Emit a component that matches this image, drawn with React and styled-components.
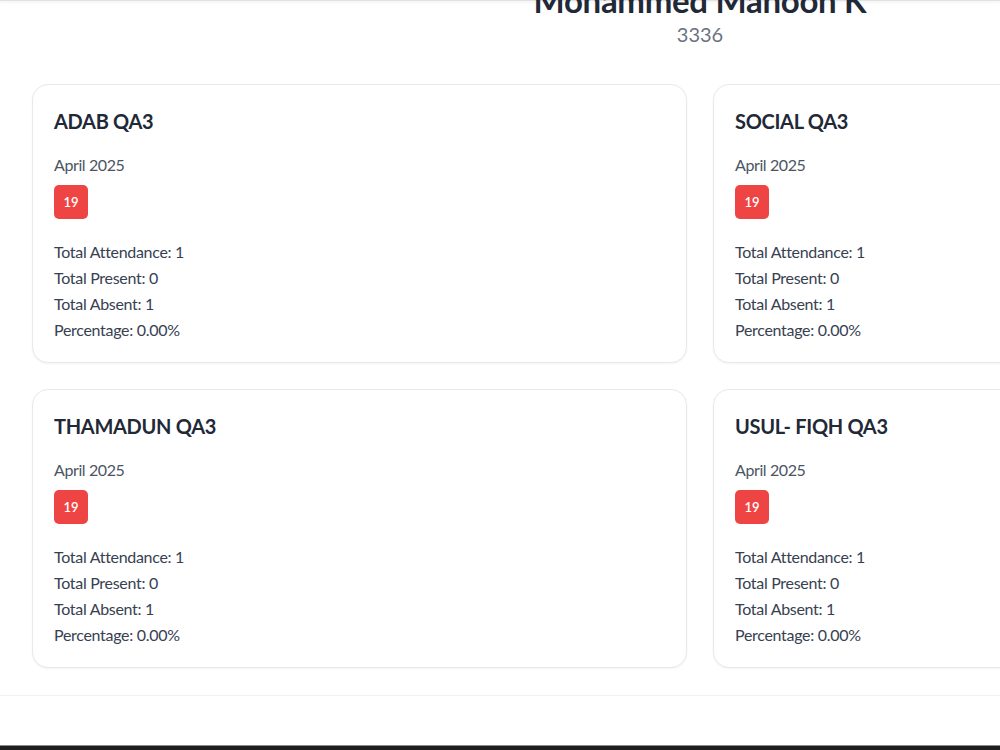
import styled, { createGlobalStyle } from 'styled-components'

const GlobalStyle = createGlobalStyle`
    html, body {
        margin: 0;
        padding: 0;
        background: #ffffff;
        overflow-x: hidden;
    }
    body {
        font-family: Lato, "Open Sans", "Liberation Sans", sans-serif;
        color: #1f2937;
    }
    * {
        box-sizing: border-box;
    }
`

const subjects = [
    { name: 'ADAB QA3', month: 'April 2025', days: [19], total: 1, present: 0, absent: 1 },
    { name: 'SOCIAL QA3', month: 'April 2025', days: [19], total: 1, present: 0, absent: 1 },
    { name: 'THAMADUN QA3', month: 'April 2025', days: [19], total: 1, present: 0, absent: 1 },
    { name: 'USUL- FIQH QA3', month: 'April 2025', days: [19], total: 1, present: 0, absent: 1 },
]

const percent = (s) => (s.total ? (s.present / s.total) * 100 : 0).toFixed(2)

export default function App() {
    return (
        <>
            <GlobalStyle />
            <TopEdge />
            <Page>
                <Profile>
                    <StudentName>Mohammed Mahoon K</StudentName>
                    <AdmissionNo>3336</AdmissionNo>
                </Profile>
                <CardGrid>
                    {subjects.map((s) => (
                        <SubjectCard key={s.name}>
                            <SubjectTitle>{s.name}</SubjectTitle>
                            <Month>{s.month}</Month>
                            <DayList>
                                {s.days.map((d) => (
                                    <AbsentDay key={d}>{d}</AbsentDay>
                                ))}
                            </DayList>
                            <Stats>
                                <li>Total Attendance: {s.total}</li>
                                <li>Total Present: {s.present}</li>
                                <li>Total Absent: {s.absent}</li>
                                <li>Percentage: {percent(s)}%</li>
                            </Stats>
                        </SubjectCard>
                    ))}
                </CardGrid>
            </Page>
            <Divider />
            <Footer />
        </>
    )
}

const TopEdge = styled.div`
    height: 1px;
    background: #e2e2e2;
    box-shadow: 0 1px 3px rgba(0, 0, 0, 0.12);
`

const Page = styled.main`
    width: 1400px;
    padding: 0 32px 27px;
`

const Profile = styled.header`
    display: flex;
    flex-direction: column;
    align-items: center;
    margin-top: -21px;
    margin-bottom: 38px;
`

const StudentName = styled.h1`
    margin: 0;
    font-size: 33px;
    font-weight: 700;
    letter-spacing: -0.3px;
    color: #1f2937;
`

const AdmissionNo = styled.p`
    margin: 2px 0 0;
    font-size: 20px;
    color: #6b7280;
`

const CardGrid = styled.section`
    display: grid;
    grid-template-columns: 1fr 1fr;
    gap: 26px 26px;
`

const SubjectCard = styled.article`
    background: #ffffff;
    border: 1px solid #e9e9e9;
    border-radius: 16px;
    box-shadow: 0 1px 2px rgba(0, 0, 0, 0.05);
    padding: 22px 21px 19px;
`

const SubjectTitle = styled.h3`
    margin: 0 0 18px;
    font-size: 20px;
    line-height: 28px;
    font-weight: 700;
    letter-spacing: -0.3px;
    color: #1f2937;
`

const Month = styled.p`
    margin: 0 0 8px;
    font-size: 16px;
    line-height: 24px;
    letter-spacing: -0.4px;
    color: #4b5563;
`

const DayList = styled.div`
    display: flex;
    gap: 6px;
    margin-bottom: 20px;
`

const AbsentDay = styled.span`
    display: flex;
    align-items: center;
    justify-content: center;
    width: 34px;
    height: 34px;
    border-radius: 5px;
    background: #ef4444;
    color: #ffffff;
    font-size: 13px;
    font-weight: 600;
`

const Stats = styled.ul`
    list-style: none;
    margin: 0;
    padding: 0;
    font-size: 16px;
    line-height: 26px;
    letter-spacing: -0.3px;
    color: #374151;
`

const Divider = styled.div`
    border-top: 1px solid #f1f1f1;
    height: 50px;
`

const Footer = styled.footer`
    height: 80px;
    background: #1e1e1e;
    border-top: 1px solid #8a8a8a;
`
